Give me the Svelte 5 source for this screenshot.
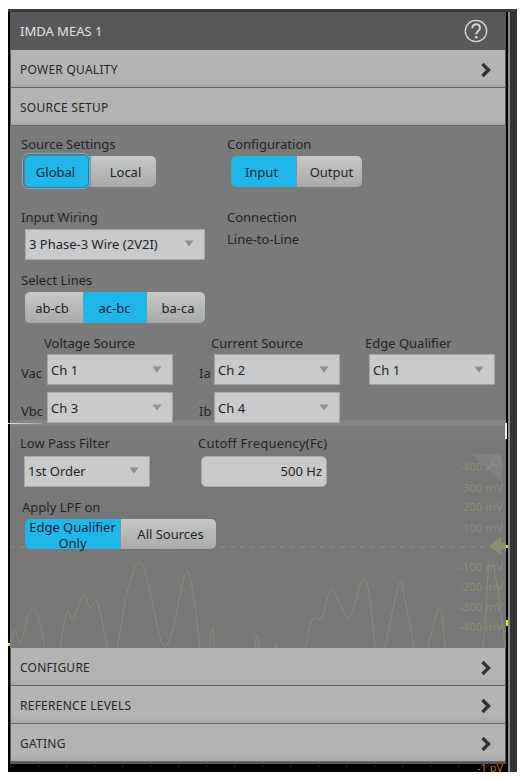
<script>
  const pts = [[8,660],[14,631],[21,642],[28,617],[34,610],[40,623],[48,660],[57,660],[67,612],[73,620],[83,595],[90,608],[98,604],[110,660],[115,660],[127,593],[139,562],[148,583],[162,643],[172,632],[188,572],[202,660],[207,660],[213,628],[218,660],[250,660],[257,635],[262,660],[272,660],[276,642],[279,660],[300,660],[312,620],[322,618],[332,590],[349,617],[362,580],[369,593],[377,660],[382,660],[399,584],[405,600],[417,660],[424,660],[440,608],[449,660],[480,660],[490,560],[502,620],[506,660]].map(([x, y]) => [x - 10, y - 423]);
  let wave = `M${pts[0][0]} ${pts[0][1]}`;
  for (let i = 0; i < pts.length - 1; i++) {
    const a = pts[Math.max(i - 1, 0)], b = pts[i], c = pts[i + 1], d = pts[Math.min(i + 2, pts.length - 1)];
    const k = 6;
    wave += ` C${b[0] + (c[0] - a[0]) / k} ${b[1] + (c[1] - a[1]) / k} ${c[0] - (d[0] - b[0]) / k} ${c[1] - (d[1] - b[1]) / k} ${c[0]} ${c[1]}`;
  }
  const axis = [['400 mV', 44], ['300 mV', 65], ['200 mV', 84], ['100 mV', 105], ['-100 mV', 144], ['-200 mV', 164], ['-300 mV', 184], ['-400 mV', 204]];
  const tail = ['CONFIGURE', 'REFERENCE LEVELS', 'GATING'];
</script>

{#snippet chevron()}
  <svg class="chev" width="12" height="16" viewBox="0 0 12 16"><path d="M2.5 2 L8.5 8 L2.5 14" fill="none" stroke="#333" stroke-width="3.4"/></svg>
{/snippet}
{#snippet arrow()}
  <svg class="arr" width="10" height="7" viewBox="0 0 10 7"><path d="M0.5 0.5 H9.5 L5 6.5 Z" fill="#8d8e8f"/></svg>
{/snippet}

<div class="frame">
  <div class="panel">
    <header class="head">
      <span>IMDA MEAS 1</span>
      <svg width="24" height="24" viewBox="0 0 24 24">
        <circle cx="12" cy="12" r="10.7" fill="none" stroke="#d8d8d8" stroke-width="1.3"/>
        <path d="M8.3 9.2 C8.3 3.8 16 4.2 16 9 C16 12 12.2 12 12.2 15.2" fill="none" stroke="#d8d8d8" stroke-width="1.9"/>
        <circle cx="12.2" cy="18.3" r="1.3" fill="#d8d8d8"/>
      </svg>
    </header>
    <div class="acc">POWER QUALITY {@render chevron()}</div>
    <div class="acc">SOURCE SETUP</div>

    <section class="upper">
      <div class="row first">
        <div class="col1">
          <div class="lab">Source Settings</div>
          <div class="seg ring">
            <button class="on w65">Global</button><button class="w66">Local</button>
          </div>
        </div>
        <div>
          <div class="lab">Configuration</div>
          <div class="seg">
            <button class="on w65">Input</button><button class="w66">Output</button>
          </div>
        </div>
      </div>

      <div class="row second">
        <div class="col1">
          <div class="lab">Input Wiring</div>
          <div class="sel wide">3 Phase-3 Wire (2V2I) {@render arrow()}</div>
        </div>
        <div>
          <div class="lab">Connection</div>
          <div class="lab conn">Line-to-Line</div>
        </div>
      </div>

      <div class="third">
        <div class="lab">Select Lines</div>
        <div class="seg">
          <button class="l1">ab-cb</button><button class="on l2">ac-bc</button><button class="l3">ba-ca</button>
        </div>
      </div>

      <div class="sources">
        <div class="g1">
          <div class="title t1">Voltage Source</div>
          <div class="line"><span class="pre p1">Vac</span><div class="sel std">Ch 1 {@render arrow()}</div></div>
          <div class="line gap"><span class="pre p1">Vbc</span><div class="sel std">Ch 3 {@render arrow()}</div></div>
        </div>
        <div class="g2">
          <div class="title t2">Current Source</div>
          <div class="line"><span class="pre p2">Ia</span><div class="sel std">Ch 2 {@render arrow()}</div></div>
          <div class="line gap"><span class="pre p2">Ib</span><div class="sel std">Ch 4 {@render arrow()}</div></div>
        </div>
        <div>
          <div class="title">Edge Qualifier</div>
          <div class="line edge"><div class="sel std">Ch 1 {@render arrow()}</div></div>
        </div>
      </div>
    </section>

    <section class="lower">
      <svg class="scope" width="496" height="225" viewBox="0 0 496 225">
        <g stroke="#858585" stroke-width="1" stroke-dasharray="1 27">
          <path d="M0 58 H496 M0 78 H496 M0 97 H496 M0 117 H496 M0 157 H496 M0 177 H496 M0 197 H496"/>
        </g>
        <path d="M74 24 V225 M158 24 V225 M243 24 V225 M327 24 V225 M412 24 V225" stroke="#828282" stroke-dasharray="1 5"/>
        <path d="M0 124 H478" stroke="#8c8c8c" stroke-dasharray="5 5"/>
        <path d={wave} fill="none" stroke="#8c8c72" stroke-width="1"/>
      </svg>
      {#each axis as [t, y]}
        <span class="tick" style="top: {y - 7}px">{t}</span>
      {/each}
      <svg class="scope" width="496" height="225" viewBox="0 0 496 225">
        <path d="M462 31 H492 V60 Z" fill="#818181"/>
        <circle cx="486" cy="38" r="4" fill="none" stroke="#8e8e8e" stroke-width="1.2"/>
        <path d="M483 41 L477 47" stroke="#8e8e8e" stroke-width="1.4"/>
        <path d="M479 123 L491 114 V120 H497 V126 H491 V132 Z" fill="#8f8f74"/>
      </svg>
      <div class="band"></div>
      <div class="ctl">
        <div class="row lp">
          <div class="c-a">
            <div class="lab">Low Pass Filter</div>
            <div class="sel std tight">1st Order {@render arrow()}</div>
          </div>
          <div>
            <div class="lab spaced">Cutoff Frequency(Fc)</div>
            <div class="input">500 Hz</div>
          </div>
        </div>
        <div class="lab apply">Apply LPF on</div>
        <div class="seg short">
          <button class="on a1">Edge Qualifier Only</button><button class="a2">All Sources</button>
        </div>
      </div>
    </section>

    {#each tail as t}
      <div class="acc">{t} {@render chevron()}</div>
    {/each}
    <div class="foot"></div>
    <div class="dots"></div>
    <span class="neg">-1 pV</span>
    <div class="tick-l"></div>
    <div class="corner"></div>
    <div class="dot d1"></div>
    <div class="dot d2"></div>
    <div class="dot d3"></div>
  </div>
  <div class="rail"></div>
</div>

<style>
  :global(body) { margin: 0; background: #fff; }
  .frame {
    width: 509px; height: 763px; margin: 9px 0 0 8px;
    display: flex; overflow: hidden; background: #000;
    font-family: "Noto Sans", "Open Sans", sans-serif; font-size: 13px; color: #232323;
    border-top: 3px solid #3b3b3b; box-sizing: border-box;
  }
  .panel { width: 496px; margin-left: 2px; position: relative; height: 760px; }
  .rail { width: 7px; margin-left: 2px; background: #333; border-left: 2px solid #8a8a8a; flex: none; }
  .head {
    height: 38px; padding: 0 18px 0 10px; display: flex; align-items: center; justify-content: space-between;
    color: #e2e2e2; background: #58585a;
  }
  .acc {
    height: 35px; padding: 2px 13px 0 9px; display: flex; align-items: center; justify-content: space-between;
    background: linear-gradient(#b4b4b4 80%, #a9a9a9); border-bottom: 1px solid #666; font-size: 12px; letter-spacing: 0.25px; color: #262626;
    border-inline: 1px solid #58585a;
  }
  .chev { flex: none; }
  .upper { height: 297px; box-sizing: border-box; padding: 10px 0 0 11px; background: linear-gradient(#7a7a7a calc(100% - 3px), #848484 0); }
  .row { display: flex; }
  .col1 { width: 206px; }
  .lab { line-height: 16px; height: 16px; white-space: nowrap; }
  .spaced { letter-spacing: 0.2px; }
  .conn { margin-top: 6px; }
  .seg { display: flex; margin: 4px 0 0 4px; height: 31px; border-radius: 5px; width: max-content; position: relative; }
  .seg.short { height: 30px; margin-top: 4px; }
  .seg button {
    font: inherit; color: #232323; border: 0; padding: 0; height: 100%;
    background: linear-gradient(#c6c7c7, #a9aaaa); border-left: 1px solid #8e8e8e;
  }
  .seg button:first-child { border-radius: 5px 0 0 5px; border-left: 0; padding-right: 4px; }
  .seg button:last-child { border-radius: 0 5px 5px 0; padding-left: 4px; }
  .seg button.on { background: #1fb6ea; color: #123; border-left: 0; }
  .ring::before {
    content: ""; position: absolute; left: -3px; top: -3px; width: 66px; height: 34px;
    border: 1px solid #5fb7d8; border-radius: 7px; z-index: 1; box-shadow: inset 0 0 0 1px #44748a;
  }
  .w65 { width: 65px; } .w66 { width: 66px; }
  .l1 { width: 58px; } .l2 { width: 63px; } .l3 { width: 59px; }
  .seg button.a1 { width: 95px; line-height: 16px; padding-right: 0; } .a2 { width: 96px; }
  .second { margin-top: 22px; }
  .third { margin-top: 12px; }
  .sel {
    height: 31px; box-sizing: border-box; background: #c9cacb; border: 1px solid #a4a5a6;
    display: flex; align-items: center; justify-content: space-between; padding: 0 10px 0 3px; white-space: nowrap;
  }
  .arr { flex: none; }
  .wide { width: 180px; margin: 4px 0 0 4px; padding-bottom: 2px; }
  .std { width: 126px; }
  .tight { margin: 5px 0 0 4px; padding-bottom: 2px; }
  .sources { display: flex; margin-top: 12px; }
  .g1 { width: 178px; } .g2 { width: 166px; }
  .title { line-height: 16px; height: 16px; white-space: nowrap; margin-bottom: 3px; }
  .t1 { margin-left: 23px; } .t2 { margin-left: 12px; }
  .line { display: flex; align-items: flex-end; }
  .gap { margin-top: 7px; }
  .edge { margin-left: 4px; }
  .pre { padding-bottom: 4px; line-height: 16px; }
  .p1 { width: 26px; } .p2 { width: 15px; }
  .lower { height: 225px; position: relative; background: linear-gradient(#848484 3px, #777 0); overflow: hidden; }
  .band { position: absolute; inset: 3px 0 auto 0; height: 21px; background: rgba(255,255,255,.03); }
  .scope { position: absolute; left: 0; top: 0; }
  .tick { position: absolute; right: 3px; font-size: 11.5px; line-height: 14px; color: #8d8d7a; white-space: nowrap; }
  .ctl { position: relative; padding: 12px 0 0 10px; }
  .c-a { width: 178px; }
  .apply { margin: 12px 0 0 2px; }
  .short { margin-left: 5px; }
  .input {
    width: 126px; height: 31px; margin: 5px 0 0 3px; box-sizing: border-box; background: #c9cacb; border: 1px solid #a9aaab;
    border-radius: 5px; display: flex; align-items: center; justify-content: flex-end; padding: 0 4px 2px 0;
  }
  .foot { height: 2px; background: #58585a; }
  .dots { height: 1px; margin-top: 2px; background: repeating-linear-gradient(90deg, #555 0 1px, transparent 1px 28px); }
  .neg { position: absolute; right: 3px; bottom: 0; font-size: 11px; line-height: 9px; color: #b86f1c; }
  .tick-l { position: absolute; left: -2px; top: 411px; width: 34px; height: 1px; background: linear-gradient(90deg, #e8e8e8, #9a9a9a); }
  .corner { position: absolute; right: -1px; top: 411px; width: 2px; height: 16px; background: #eee; }
  .dot { position: absolute; width: 2px; height: 3px; background: #e8e020; }
  .d1 { right: -2px; top: 533px; }
  .d2 { right: -2px; top: 608px; height: 6px; }
  .d3 { left: -2px; top: 631px; }
</style>
